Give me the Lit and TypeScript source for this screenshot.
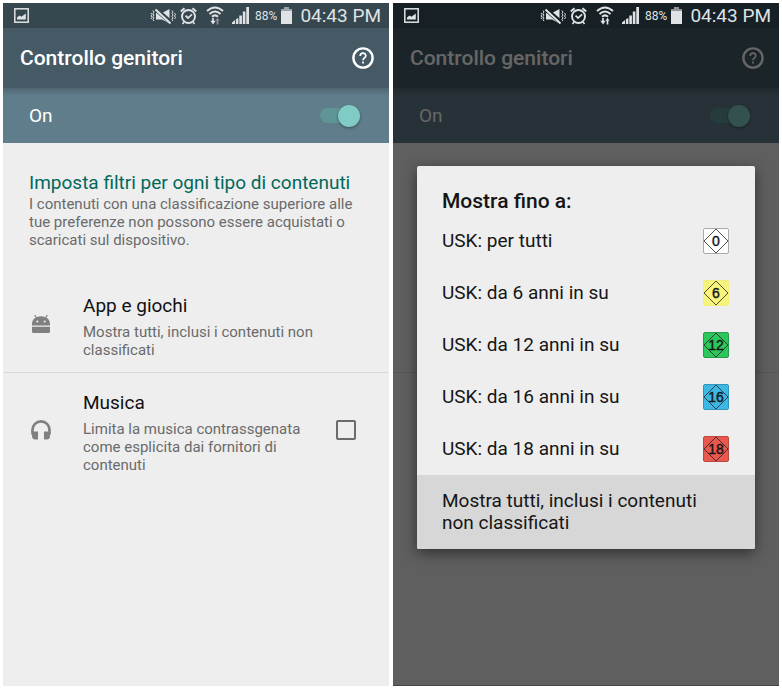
import { LitElement, html, css, svg, nothing } from "lit";
import { customElement, property } from "lit/decorators.js";
import { classMap } from "lit/directives/class-map.js";

const mutedIcon = svg`<svg width="26" height="18" viewBox="0 0 26 18" fill="none" stroke="currentColor">
  <path d="M19.5 2 12 6H6V12.500H12L19.500 16.500Z" fill="currentColor" stroke="none"/>
  <path d="M5 1.500 21 15.500" stroke="var(--bar)" stroke-width="4.500"/>
  <path d="M5.500 2.500 20.500 16.500" stroke-width="2"/>
  <path d="M3 3.500 4 5 3 6.500 4 8 3 9.500 4 11 3 12.500 4 14M1 6 2 7.500 1 9 2 10.500 1 12M22 3.500 23 5 22 6.500 23 8 22 9.500 23 11 22 12.500 23 14M24.500 6 25.500 7.500 24.500 9 25.500 10.500 24.500 12" stroke-width="1"/>
</svg>`;

const alarmIcon = svg`<svg width="17" height="18" viewBox="0 0 17 18" fill="none" stroke="currentColor">
  <circle cx="8.5" cy="9.5" r="6.5" stroke-width="1.9"/>
  <path d="M5.5 8.700 8 11 12 7.300" stroke-width="1.700"/>
  <path d="M0.800 4.500 4.500 1.300M16.200 4.500 12.500 1.300" stroke-width="2"/>
  <path d="M4 15 2.500 17M13 15 14.500 17" stroke-width="1.600"/>
</svg>`;

const wifiIcon = (dim: boolean) => svg`<svg width="18" height="19" viewBox="0 0 18 19" fill="none" stroke="currentColor">
  <path d="M1 5Q9-2 17 5M3.500 8Q9 3 14.500 8M6 10.800Q9 8 12 10.800" stroke-width="2"/>
  <path d="M7 12V16" stroke-width="1.700"/><path d="M4.300 14.700H9.700L7 18.500Z" fill="currentColor" stroke="none"/>
  <g opacity=${dim ? "0.5" : "1"}><path d="M11.500 14V18.500" stroke-width="1.700"/><path d="M9.500 14.700H13.500L11.500 11.800Z" fill="currentColor" stroke="none"/></g>
</svg>`;

const signalIcon = svg`<svg width="17" height="17" viewBox="0 0 17 17" fill="currentColor">
  <path d="M0 17V15.500L3 13V17ZM3.900 12.200 6.400 11V17H3.900ZM7.300 8.500H9.900V17H7.300ZM10.800 4.500H13.400V17H10.800ZM14.300 0H17V17H14.300Z"/>
</svg>`;

const batteryIcon = svg`<svg width="11" height="17" viewBox="0 0 11 17" fill="currentColor">
  <path d="M3 0H8V2H3Z" opacity="0.6"/><path d="M0 2H11V4H0Z" opacity="0.6"/><path d="M0 4H11V17H0Z"/>
</svg>`;

const pictureIcon = svg`<svg width="15" height="15" viewBox="0 0 15 15">
  <rect x="0.8" y="0.8" width="13.4" height="13.4" fill="none" stroke="currentColor" stroke-width="1.5"/>
  <path d="M3 11.500V9.500L5.500 7.500 7.500 8.700 11.800 5.500V11.500Z" fill="currentColor"/>
</svg>`;

const helpIcon = svg`<svg width="22" height="22" viewBox="0 0 22 22" fill="none" stroke="currentColor">
  <circle cx="11" cy="11" r="9.6" stroke-width="2.4"/>
  <path d="M8.200 9C8.200 5.200 13.800 5.200 13.800 8.700 13.800 10.800 11 10.900 11 13.300" stroke-width="1.700"/>
  <path d="M10.100 14.600H11.900V16.400H10.100Z" fill="currentColor" stroke="none"/>
</svg>`;

const androidIcon = svg`<svg width="20" height="20" viewBox="0 0 20 20" fill="#808080">
  <path d="M1 11.500V10C1 7 2.300 4.900 4.600 3.700L3.200 1.300 4.200 0.700 5.700 3.200C8.400 2 11.600 2 14.300 3.200L15.800 0.700 16.800 1.300 15.400 3.700C17.700 4.900 19 7 19 10V11.500ZM6.300 6.400A1.100 1.100 0 1 0 6.300 8.600 1.100 1.100 0 1 0 6.300 6.400ZM13.700 6.400A1.100 1.100 0 1 0 13.700 8.600 1.100 1.100 0 1 0 13.700 6.400Z" fill-rule="evenodd"/>
  <path d="M1 12.700H19V17.500Q19 19 17.500 19H2.500Q1 19 1 17.500Z"/>
</svg>`;

const headphonesIcon = svg`<svg width="20" height="20" viewBox="0 0 20 20">
  <path d="M1.500 14.500V9.800A8.500 8.400 0 0 1 18.500 9.800V14.500" fill="none" stroke="#808080" stroke-width="2.700"/>
  <path d="M1 11.500H7V19.500H4.500Q1 19.500 1 16ZM19 11.500H13V19.500H15.500Q19 19.500 19 16Z" fill="#808080"/>
</svg>`;

interface Rating {
  label: string;
  age: string;
  fill: string;
  edge: string;
}

const ratings: Rating[] = [
  { label: "USK: per tutti", age: "0", fill: "#ffffff", edge: "#aaaaaa" },
  { label: "USK: da 6 anni in su", age: "6", fill: "#f7f47c", edge: "#f2ee7c" },
  { label: "USK: da 12 anni in su", age: "12", fill: "#2dc65c", edge: "#259b4b" },
  { label: "USK: da 16 anni in su", age: "16", fill: "#3db7e4", edge: "#3194b9" },
  { label: "USK: da 18 anni in su", age: "18", fill: "#e9584e", edge: "#b9483f" },
];

@customElement("rating-dialog")
export class RatingDialog extends LitElement {
  static styles = css`
    :host {
      display: block;
      background: #eeeeee;
      border-radius: 2px;
      overflow: hidden;
      box-shadow: 0 4px 14px rgba(0, 0, 0, 0.5);
      color: #151515;
    }
    .title {
      margin: 0;
      padding: 21px 25px 0;
      font-size: 21px;
      line-height: 28px;
      font-weight: 500;
    }
    .option {
      display: flex;
      align-items: center;
      justify-content: space-between;
      box-sizing: border-box;
      width: 100%;
      min-height: 52px;
      margin: 0;
      padding: 0 26px 0 25px;
      border: 0;
      background: none;
      color: inherit;
      font: inherit;
      font-size: 19px;
      line-height: 22px;
      text-align: left;
    }
    .option.all {
      padding-top: 15px;
      padding-bottom: 15px;
      background: #d7d7d7;
    }
    .badge {
      flex: none;
    }
    .age {
      font: 14px "Liberation Sans", sans-serif;
      fill: #151515;
      stroke: #151515;
      stroke-width: 0.4px;
      text-anchor: middle;
    }
  `;

  render() {
    return html`
      <h2 class="title">Mostra fino a:</h2>
      ${ratings.map(
        (r) => html`<button class="option" type="button">
          <span>${r.label}</span>
          <svg class="badge" width="26" height="26" viewBox="0 0 26 26">
            <rect x="0.5" y="0.5" width="25" height="25" rx="1.5" fill=${r.fill} stroke=${r.edge} />
            <path d="M13 1 25 13 13 25 1 13Z" fill="none" stroke="#222222" stroke-width="0.8" />
            <text class="age" x="13" y="18">${r.age}</text>
          </svg>
        </button>`,
      )}
      <button class="option all" type="button">Mostra tutti, inclusi i contenuti non classificati</button>
    `;
  }
}

@customElement("phone-screen")
export class PhoneScreen extends LitElement {
  @property({ type: Boolean }) dialog = false;

  static styles = css`
    :host {
      display: flex;
      flex-direction: column;
      min-width: 0;
      background: #eeeeee;
    }
    .status {
      --bar: #37474f;
      display: flex;
      align-items: center;
      height: 25px;
      box-sizing: border-box;
      padding: 0 8px 0 11px;
      background: var(--bar);
      color: #dfe3e5;
    }
    .status.dark {
      --bar: #162025;
    }
    .tray {
      display: flex;
      align-items: center;
      margin-left: auto;
    }
    .alarm {
      margin-left: 4px;
    }
    .wifi {
      margin-left: 9px;
    }
    .signal {
      margin-left: 8px;
    }
    .percent {
      margin: 0 4px 0 6px;
      font-size: 12px;
    }
    .clock {
      margin-left: 8px;
      font-size: 19px;
      line-height: 25px;
    }
    .status svg {
      display: block;
    }
    .screen {
      position: relative;
      flex: 1;
      display: flex;
      flex-direction: column;
    }
    .header {
      display: flex;
      align-items: center;
      justify-content: space-between;
      height: 60px;
      padding: 0 15px 0 17px;
      background: #455a64;
      color: #ffffff;
    }
    .title {
      margin: 0;
      font-size: 21px;
      line-height: 28px;
      font-weight: 500;
    }
    .help {
      display: block;
      padding: 0;
      border: 0;
      background: none;
      color: inherit;
      line-height: 0;
    }
    .switch-row {
      display: flex;
      align-items: center;
      justify-content: space-between;
      height: 55px;
      padding: 0 29px 0 26px;
      background: linear-gradient(#4f6772, #607d8b 8px);
      color: #ffffff;
      font-size: 19px;
    }
    .switch {
      appearance: none;
      display: flex;
      align-items: center;
      justify-content: flex-end;
      width: 40px;
      height: 15px;
      margin: 0;
      border-radius: 8px;
      background: #5f9595;
    }
    .switch::before {
      content: "";
      width: 22px;
      height: 22px;
      flex: none;
      border-radius: 50%;
      background: #80cbc4;
      box-shadow: 0 1px 3px rgba(0, 0, 0, 0.4);
    }
    .intro {
      padding: 27px 26px;
    }
    .intro-title {
      margin: 0;
      color: #00695c;
      font-size: 19px;
      line-height: 25px;
      font-weight: 400;
    }
    .text {
      margin: 0;
      color: #6a6a6a;
      font-size: 15px;
      line-height: 18px;
    }
    .row {
      display: flex;
      align-items: center;
      padding: 13px 33px 13px 28px;
    }
    .row.ruled {
      border-bottom: 1px solid #d8d8d8;
    }
    .row svg {
      flex: none;
      margin-right: 32px;
    }
    .row-body {
      flex: 1;
      margin-right: 30px;
      padding-top: 4px;
    }
    .row-title {
      margin: 0 0 4px;
      color: #111111;
      font-size: 19px;
      line-height: 26px;
      font-weight: 400;
    }
    .check {
      appearance: none;
      flex: none;
      box-sizing: border-box;
      width: 20px;
      height: 20px;
      margin: 0;
      border: 2px solid #6b6b6b;
      border-radius: 2px;
    }
    .covered {
      height: 229px;
      border-bottom: 1px solid #d8d8d8;
    }
    .scrim {
      position: absolute;
      inset: 0;
      display: flex;
      flex-direction: column;
      justify-content: center;
      padding: 0 24px;
      background: rgba(0, 0, 0, 0.6);
      box-shadow: inset 0 -1px #444444;
    }
  `;

  private renderSettings() {
    return html`
      <section class="intro">
        <h2 class="intro-title">Imposta filtri per ogni tipo di contenuti</h2>
        <p class="text">
          I contenuti con una classificazione superiore alle tue preferenze non possono essere acquistati o scaricati
          sul dispositivo.
        </p>
      </section>
      <section class="row ruled">
        ${androidIcon}
        <div class="row-body">
          <h3 class="row-title">App e giochi</h3>
          <p class="text">Mostra tutti, inclusi i contenuti non classificati</p>
        </div>
      </section>
      <section class="row">
        ${headphonesIcon}
        <div class="row-body">
          <h3 class="row-title"><label for="music">Musica</label></h3>
          <p class="text">Limita la musica contrassgenata come esplicita dai fornitori di contenuti</p>
        </div>
        <input class="check" id="music" type="checkbox" />
      </section>
    `;
  }

  render() {
    return html`
      <div class=${classMap({ status: true, dark: this.dialog })}>
        ${pictureIcon}
        <div class="tray">
          ${mutedIcon}
          <span class="alarm">${alarmIcon}</span>
          <span class="wifi">${wifiIcon(!this.dialog)}</span>
          <span class="signal">${signalIcon}</span>
          <span class="percent">88%</span>
          ${batteryIcon}
          <span class="clock">04:43 PM</span>
        </div>
      </div>
      <div class="screen">
        <header class="header">
          <h1 class="title">Controllo genitori</h1>
          <button class="help" type="button">${helpIcon}</button>
        </header>
        <div class="switch-row">
          <label for="filter">On</label>
          <input class="switch" id="filter" type="checkbox" role="switch" checked />
        </div>
        ${this.dialog ? html`<div class="covered"></div>` : this.renderSettings()}
        ${this.dialog ? html`<div class="scrim"><rating-dialog></rating-dialog></div>` : nothing}
      </div>
    `;
  }
}

@customElement("app-root")
export class AppRoot extends LitElement {
  static styles = css`
    :host {
      display: flex;
      gap: 4px;
      box-sizing: border-box;
      min-height: 100vh;
      padding: 3px 3px 4px;
      background: #ffffff;
      font-family: Roboto, sans-serif;
    }
    .phone {
      flex: 1;
    }
  `;

  render() {
    return html`
      <phone-screen class="phone"></phone-screen>
      <phone-screen class="phone" dialog></phone-screen>
    `;
  }
}
